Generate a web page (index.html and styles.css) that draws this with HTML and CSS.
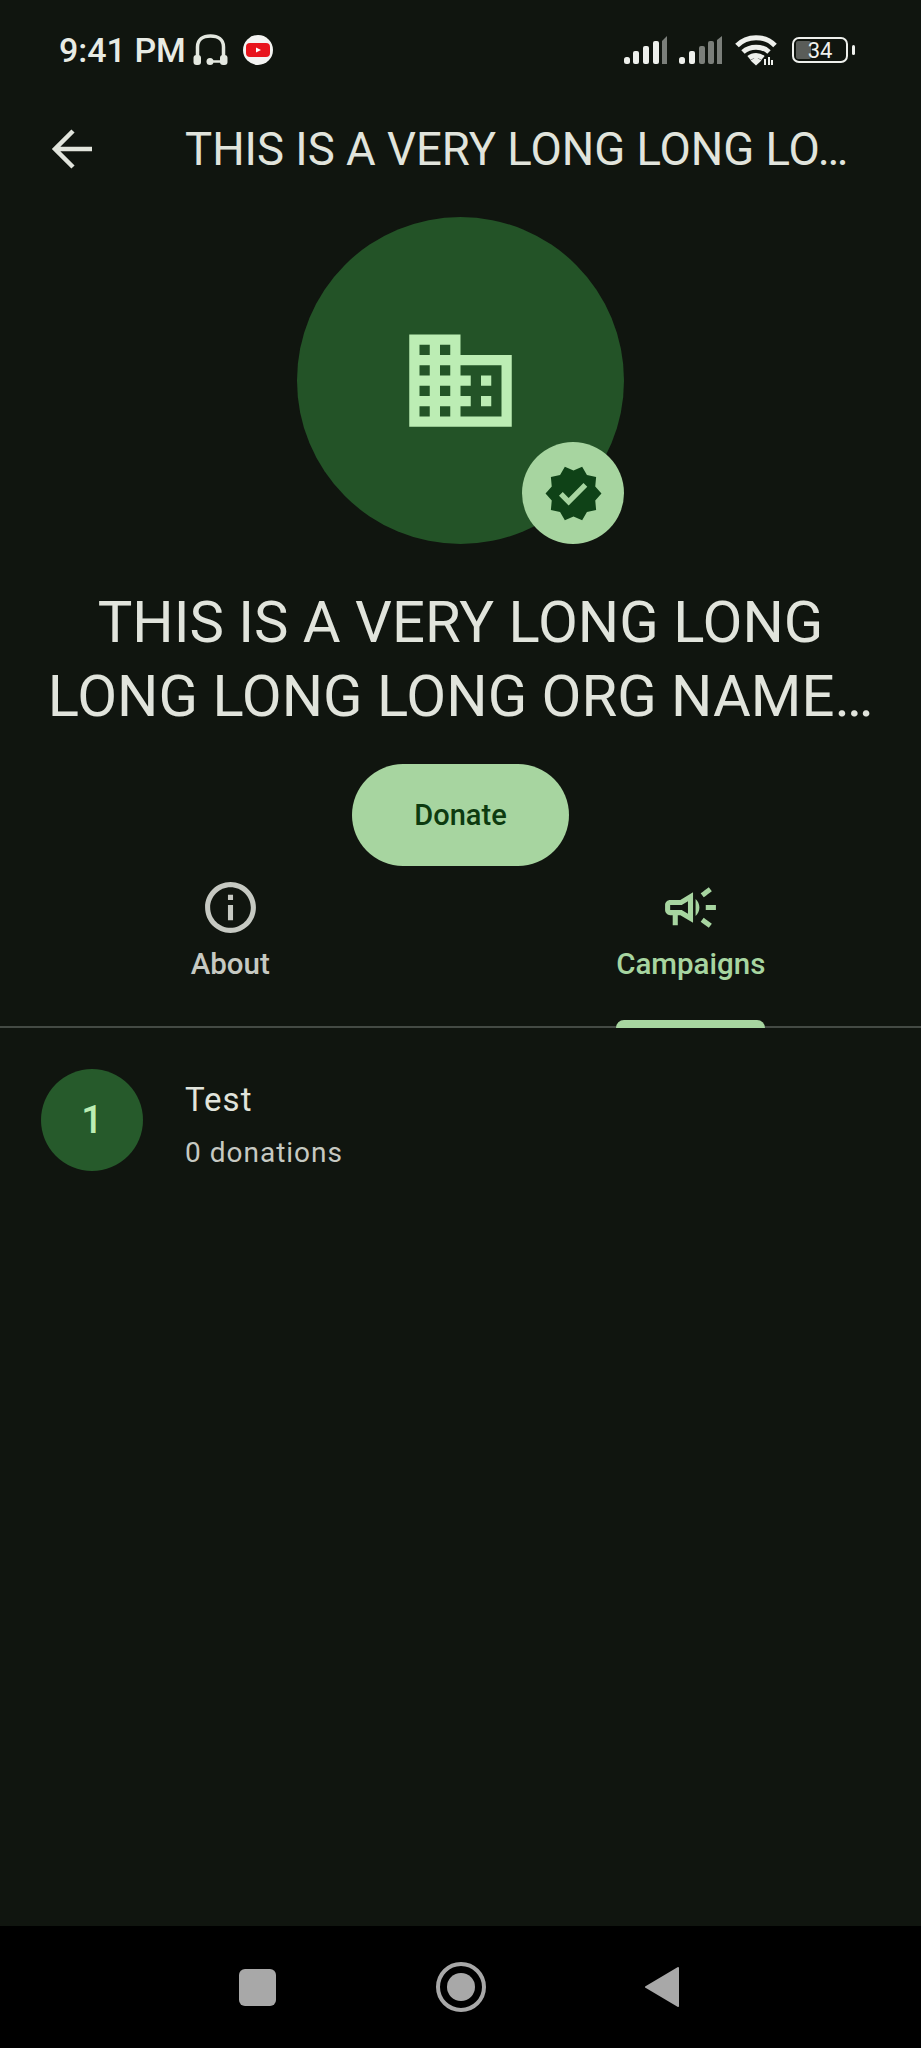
FILE: index.html
```html
<!doctype html>
<html lang="en-US">
  <head>
    <meta charset="utf-8" />
    <title>Organization</title>
    <link rel="stylesheet" href="styles.css">
  </head>
  <body>
    <div class="screen">
      <div class="status-bar">
        <div class="status-left">
          <span class="clock">9:41 PM</span>
          <svg class="headset" viewBox="0 0 35 32" width="35" height="32">
            <path d="M4.500 23V13C4.500 5.500 10 2 17.500 2S30.500 5.500 30.500 13V23" fill="none" stroke="#e4e8e0" stroke-width="3.500"/>
            <rect x="0.500" y="21" width="7.500" height="10" rx="3" fill="#e4e8e0"/>
            <rect x="27" y="21" width="7.500" height="10" rx="3" fill="#e4e8e0"/>
            <path d="M17 27.500H28" stroke="#e4e8e0" stroke-width="2.500"/>
            <circle cx="17" cy="27.500" r="3.500" fill="#e4e8e0"/>
          </svg>
          <svg class="yt" viewBox="0 0 30 30" width="30" height="30">
            <circle cx="15" cy="15" r="15" fill="#f4f4f2"/>
            <rect x="3" y="8" width="24" height="14" rx="4" fill="#e8141c"/>
            <path d="M13 12.500L18 15L13 17.500Z" fill="#fff"/>
          </svg>
        </div>
        <div class="status-right">
          <svg viewBox="0 0 44 28" width="44" height="28">
            <rect x="0" y="21" width="6" height="7" rx="2.500" fill="#eef0ec"/>
            <rect x="9" y="15" width="6" height="13" rx="2" fill="#eef0ec"/>
            <rect x="19" y="10" width="6" height="18" rx="2" fill="#eef0ec"/>
            <rect x="29" y="5" width="6" height="23" rx="2" fill="#eef0ec"/>
            <path d="M38 5L43 0V28H38Z" fill="#7b7f7a"/>
          </svg>
          <svg class="sim-two" viewBox="0 0 44 28" width="44" height="28">
            <rect x="0" y="21" width="6" height="7" rx="2.500" fill="#eef0ec"/>
            <rect x="10" y="15" width="6" height="13" rx="2" fill="#eef0ec"/>
            <rect x="20" y="10" width="6" height="18" rx="2" fill="#7b7f7a"/>
            <rect x="29" y="5" width="6" height="23" rx="2" fill="#7b7f7a"/>
            <path d="M38 4L43 0V28H38Z" fill="#7b7f7a"/>
          </svg>
          <svg class="wifi" viewBox="0 0 42 32" width="42" height="32">
            <path d="M2 11.500C12 1 30 1 40 11.500M8 18C15 11.500 27 11.500 34 18M14 24C18 20.500 24 20.500 28 24" fill="none" stroke="#eef0ec" stroke-width="5"/>
            <path d="M15.500 26.500L21 23L26.500 26.500L21 31.500Z" fill="#eef0ec"/>
            <path d="M30 25V31M34 23V31M37 26V31" stroke="#eef0ec" stroke-width="2"/>
          </svg>
          <div class="battery">
            <div class="battery-body">
              <span class="battery-fill"></span>
              <span class="battery-level">34</span>
            </div>
            <span class="battery-nub"></span>
          </div>
        </div>
      </div>

      <div class="app-bar">
        <svg class="back" viewBox="0 0 44 44" width="44" height="44">
          <path d="M42 22H5M23 4L5 22L23 40" fill="none" stroke="#e1e4dc" stroke-width="4.500"/>
        </svg>
        <h1 class="app-title">THIS IS A VERY LONG LONG LO…</h1>
      </div>

      <div class="org-avatar">
        <svg class="building" viewBox="0 0 24 24" width="123" height="123">
          <path d="M12 7V3H2v18h20V7H12zM6 19H4v-2h2v2zm0-4H4v-2h2v2zm0-4H4V9h2v2zm0-4H4V5h2v2zm4 12H8v-2h2v2zm0-4H8v-2h2v2zm0-4H8V9h2v2zm0-4H8V5h2v2zm10 12h-8v-2h2v-2h-2v-2h2v-2h-2V9h8v10zm-2-8h-2v2h2v-2zm0 4h-2v2h2v-2z" fill="#bcedb4"/>
        </svg>
        <div class="badge">
          <svg viewBox="0 0 24 24" width="61" height="61">
            <path d="M23 12l-2.440-2.790.340-3.690-3.610-.820-1.890-3.200L12 2.960 8.600 1.500 6.710 4.690 3.100 5.500l.340 3.700L1 12l2.440 2.790-.340 3.700 3.610.820L8.600 22.500l3.400-1.470 3.400 1.460 1.890-3.190 3.610-.820-.340-3.690L23 12zm-12.910 4.720l-3.800-3.810 1.480-1.480 2.320 2.330 5.850-5.870 1.480 1.480-7.330 7.350z" fill="#0f4217"/>
          </svg>
        </div>
      </div>

      <h2 class="org-name">THIS IS A VERY LONG LONG<br>LONG LONG LONG ORG NAME…</h2>

      <button class="donate">Donate</button>

      <div class="tabs">
        <div class="tab">
          <svg viewBox="0 0 24 24" width="61" height="61">
            <path d="M11 7h2v2h-2zm0 4h2v6h-2zm1-9C6.480 2 2 6.480 2 12s4.480 10 10 10 10-4.480 10-10S17.520 2 12 2zm0 18c-4.410 0-8-3.590-8-8s3.590-8 8-8 8 3.590 8 8-3.590 8-8 8z" fill="currentColor"/>
          </svg>
          <span class="tab-label">About</span>
        </div>
        <div class="tab tab-active">
          <svg viewBox="0 0 24 24" width="61" height="61">
            <path d="M18 11v2h4v-2h-4zm-2 6.610c.960.710 2.210 1.650 3.200 2.390.400-.530.800-1.070 1.200-1.600-.990-.740-2.240-1.680-3.200-2.400-.400.540-.800 1.080-1.200 1.610zM20.400 5.600c-.400-.530-.800-1.070-1.200-1.600-.990.740-2.240 1.680-3.200 2.400.400.530.800 1.070 1.200 1.600.960-.720 2.210-1.650 3.200-2.400zM4 9c-1.100 0-2 .900-2 2v2c0 1.100.900 2 2 2h1v4h2v-4h1l5 3V6L8 9H4zm5.030 1.710L11 9.530v4.940l-1.970-1.180-.480-.290H4v-2h4.550l.480-.290zM15.500 12c0-1.330-.580-2.530-1.500-3.350v6.690c.920-.810 1.500-2.010 1.500-3.340z" fill="currentColor"/>
          </svg>
          <span class="tab-label">Campaigns</span>
          <span class="tab-indicator"></span>
        </div>
      </div>

      <div class="campaign-row">
        <div class="campaign-number">1</div>
        <div class="campaign-text">
          <div class="campaign-name">Test</div>
          <div class="campaign-count">0 donations</div>
        </div>
      </div>

      <div class="nav-bar">
        <span class="nav-square"></span>
        <span class="nav-home"><span class="nav-home-dot"></span></span>
        <svg viewBox="0 0 34 42" width="34" height="42">
          <path d="M33 2L1 21L33 40Z" fill="#a8a8a8" stroke="#a8a8a8" stroke-width="2" stroke-linejoin="round"/>
        </svg>
      </div>
    </div>
  </body>
</html>
```

FILE: styles.css
```css
*
{
    box-sizing: border-box;
}

body
{
    margin: 0;
    background: #10150f;
    font-family: Roboto, "Liberation Sans", sans-serif;
}

.screen
{
    width: 921px;
    height: 2048px;
    display: flex;
    flex-direction: column;
    align-items: center;
    background: #10150f;
}

/* status bar */

.status-bar
{
    width: 100%;
    height: 100px;
    flex: none;
    display: flex;
    justify-content: space-between;
    align-items: center;
    padding: 0 66px 0 59px;
}

.status-left,
.status-right
{
    display: flex;
    align-items: center;
}

.clock
{
    font-size: 34px;
    font-weight: 500;
    color: #e8ebe4;
}

.headset
{
    margin-left: 7px;
}

.yt
{
    margin-left: 15px;
}

.sim-two
{
    margin-left: 11px;
}

.wifi
{
    margin-left: 12px;
}

.battery
{
    display: flex;
    align-items: center;
    margin-left: 15px;
}

.battery-body
{
    position: relative;
    width: 56px;
    height: 26px;
    border: 2.500px solid #eef0ec;
    border-radius: 7px;
    display: flex;
    align-items: center;
    justify-content: center;
}

.battery-fill
{
    position: absolute;
    left: 2px;
    top: 2px;
    bottom: 2px;
    width: 15px;
    background: #5a5d59;
    border-radius: 2px;
}

.battery-level
{
    position: relative;
    font-size: 22px;
    color: #eef0ec;
}

.battery-nub
{
    width: 3px;
    height: 10px;
    margin-left: 4px;
    background: #eef0ec;
    border-radius: 2px;
}

/* app bar */

.app-bar
{
    width: 100%;
    height: 98px;
    flex: none;
    display: flex;
    align-items: center;
    padding-left: 50px;
}

.app-title
{
    margin: 0 0 0 91px;
    font-size: 45.500px;
    font-weight: 400;
    color: #e1e4dc;
    white-space: nowrap;
}

/* organization header */

.org-avatar
{
    position: relative;
    width: 327px;
    height: 327px;
    flex: none;
    margin-top: 19px;
    display: flex;
    align-items: center;
    justify-content: center;
    background: #235327;
    border-radius: 50%;
}

.badge
{
    position: absolute;
    right: 0;
    bottom: 0;
    width: 102px;
    height: 102px;
    display: flex;
    align-items: center;
    justify-content: center;
    background: #a7d5a0;
    border-radius: 50%;
}

.org-name
{
    margin: 41px 0 0;
    font-size: 58px;
    line-height: 74px;
    font-weight: 400;
    text-align: center;
    color: #e1e4dc;
    white-space: nowrap;
}

.donate
{
    width: 217px;
    height: 102px;
    flex: none;
    margin-top: 31px;
    padding: 0;
    border: 0;
    border-radius: 51px;
    background: #a7d5a0;
    color: #0d3b10;
    font-family: inherit;
    font-size: 29px;
    font-weight: 500;
}

/* tabs */

.tabs
{
    width: 100%;
    height: 162px;
    flex: none;
    display: flex;
    border-bottom: 2px solid #444a44;
}

.tab
{
    flex: 1;
    position: relative;
    display: flex;
    flex-direction: column;
    align-items: center;
    padding-top: 11px;
    color: #c6c9c2;
}

.tab-active
{
    color: #a7d5a0;
}

.tab-label
{
    margin-top: 9px;
    font-size: 29.500px;
    font-weight: 500;
    white-space: nowrap;
}

.tab-indicator
{
    position: absolute;
    bottom: -2px;
    width: 149px;
    height: 8px;
    background: #a7d5a0;
    border-radius: 8px 8px 0 0;
}

/* campaign list */

.campaign-row
{
    width: 100%;
    flex: none;
    display: flex;
    align-items: center;
    padding: 40px 41px 0;
}

.campaign-number
{
    width: 102px;
    height: 102px;
    flex: none;
    display: flex;
    align-items: center;
    justify-content: center;
    background: #265a2b;
    border-radius: 50%;
    color: #bcedb4;
    font-size: 38px;
    font-weight: 500;
}

.campaign-text
{
    margin-left: 42px;
    padding-top: 10px;
}

.campaign-name
{
    font-size: 33px;
    line-height: 44px;
    letter-spacing: 1px;
    color: #e1e4dc;
}

.campaign-count
{
    margin-top: 12px;
    font-size: 28px;
    line-height: 38px;
    letter-spacing: 1px;
    color: #c6c9c2;
}

/* system navigation */

.nav-bar
{
    width: 100%;
    height: 122px;
    margin-top: auto;
    flex: none;
    display: flex;
    align-items: center;
    padding-left: 239px;
    background: #000;
}

.nav-square
{
    width: 37px;
    height: 37px;
    background: #a8a8a8;
    border-radius: 6px;
}

.nav-home
{
    width: 50px;
    height: 50px;
    margin: 0 159px 0 160px;
    display: flex;
    align-items: center;
    justify-content: center;
    border: 4px solid #a8a8a8;
    border-radius: 50%;
}

.nav-home-dot
{
    width: 28px;
    height: 28px;
    background: #a8a8a8;
    border-radius: 50%;
}
```
